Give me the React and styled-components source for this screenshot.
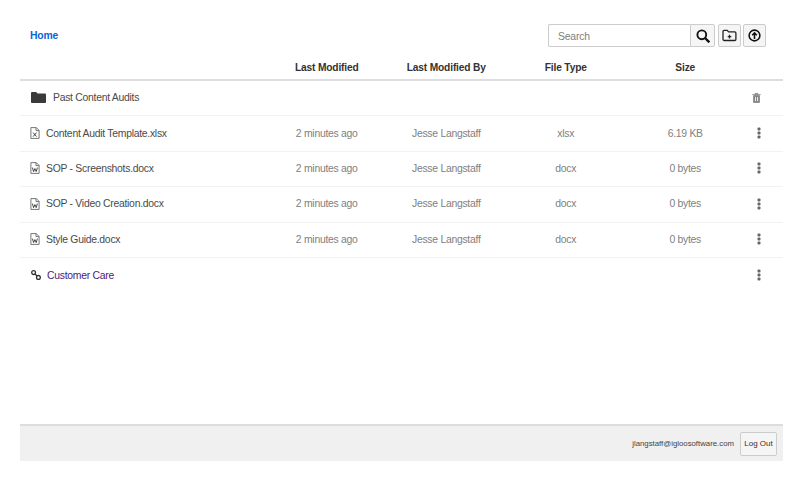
import React from 'react';
import styled, { createGlobalStyle } from 'styled-components';

const GlobalStyle = createGlobalStyle`
  html, body {
    margin: 0;
    padding: 0;
    background: #fff;
    font-family: "Liberation Sans", Arial, sans-serif;
  }
`;

const COLUMNS = '247px 119.5px 119.5px 119.5px 119.5px 38px';

const Page = styled.div`
  width: 763px;
  height: 461px;
  margin-left: 20px;
  margin-right: 17px;
  display: flex;
  flex-direction: column;
`;

const Toolbar = styled.div`
  height: 47px;
  display: flex;
  align-items: flex-end;
  justify-content: space-between;
  padding: 0 17px 0 10px;
`;

const Crumb = styled.a`
  align-self: flex-start;
  margin-top: 29px;
  font-size: 10.4px;
  letter-spacing: -0.2px;
  line-height: 13px;
  font-weight: bold;
  color: #0a66d8;
`;

const Tools = styled.div`
  display: flex;
  gap: 2.5px;
`;

const SearchGroup = styled.div`
  display: flex;
  height: 23px;
  box-sizing: border-box;
`;

const SearchInput = styled.div`
  width: 142px;
  box-sizing: border-box;
  border: 1px solid #ccc;
  border-right: none;
  border-radius: 2px 0 0 2px;
  padding-left: 9px;
  font-size: 10.4px;
  letter-spacing: -0.2px;
  line-height: 23px;
  color: #808080;
`;

const ToolButton = styled.button`
  width: ${props => props.$width || 23}px;
  height: 23px;
  padding: 0;
  box-sizing: border-box;
  display: flex;
  align-items: center;
  justify-content: center;
  background: #f5f5f5;
  border: 1px solid #ccc;
  border-radius: ${props => props.$attached ? '0 2px 2px 0' : '2px'};
`;

const HeaderRow = styled.div`
  display: grid;
  grid-template-columns: ${COLUMNS};
  height: 34px;
  box-sizing: border-box;
  border-bottom: 2px solid #ddd;
  padding-top: 15px;
  font-size: 10.2px;
  letter-spacing: -0.15px;
  line-height: 12px;
  font-weight: bold;
  color: #333;
`;

const HeaderCell = styled.div`
  text-align: center;
`;

const Row = styled.div`
  display: grid;
  grid-template-columns: ${COLUMNS};
  align-items: center;
  height: 35.4px;
  box-sizing: border-box;
  padding-bottom: 1px;
  border-bottom: ${props => props.$last ? 'none' : '1px solid #f2f2f2'};
  font-size: 10.4px;
  letter-spacing: -0.27px;
  color: #808080;
`;

const NameCell = styled.div`
  display: flex;
  align-items: center;
  gap: ${props => props.$gap || 6}px;
  padding-left: ${props => props.$pad || 10}px;
  color: ${props => props.$color || '#4a4a4a'};
`;

const Cell = styled.div`
  text-align: center;
`;

const ActionCell = styled.div`
  grid-column: 6;
  display: flex;
  justify-content: center;
  transform: translateX(${props => props.$shift || -5}px);
`;

const Footer = styled.div`
  margin-top: auto;
  height: 37px;
  box-sizing: border-box;
  background: #f0f0f0;
  border-top: 2px solid #ddd;
  display: flex;
  align-items: center;
  justify-content: flex-end;
  gap: 6px;
  padding-right: 6px;
`;

const Email = styled.span`
  font-size: 7.8px;
  color: #444;
`;

const LogOut = styled.button`
  width: 37px;
  height: 24px;
  padding: 0;
  background: #f5f5f5;
  border: 1px solid #ccc;
  border-radius: 2px;
  font-family: inherit;
  font-size: 8px;
  color: #333;
`;

const SearchIcon = () => (
  <svg width="14" height="14" viewBox="0 0 14 14" fill="none" stroke="#111" strokeWidth="1.9">
    <circle cx="5.8" cy="5.8" r="4.4" />
    <path d="M9 9l4.300 4.300" strokeWidth="2.400" />
  </svg>
);

const NewFolderIcon = () => (
  <svg width="15" height="13" viewBox="0 0 15 13" fill="none" stroke="#222" strokeWidth="1.300">
    <path d="M1 2.600c0-.8.500-1.300 1.200-1.300h3l1.400 1.600h6.100c.7 0 1.200.5 1.200 1.200v6.200c0 .7-.5 1.200-1.200 1.200H2.200c-.7 0-1.200-.5-1.200-1.200z" />
    <path d="M7.500 5.800v3.600M5.700 7.600h3.600" />
  </svg>
);

const UploadIcon = () => (
  <svg width="13" height="13" viewBox="0 0 14 14" fill="none" stroke="#111" strokeWidth="1.700">
    <circle cx="7" cy="7" r="5.800" />
    <path d="M7 10.800V4.500M4.500 6.800L7 4.200l2.500 2.600" />
  </svg>
);

const FolderIcon = () => (
  <svg width="15" height="11" viewBox="0 0 15 12" preserveAspectRatio="none" fill="#3a3a3a">
    <path d="M0 1.200C0 .5.500 0 1.200 0h3.900l1.500 1.600h7.200c.7 0 1.200.5 1.200 1.200v8c0 .7-.5 1.200-1.200 1.200H1.200C.5 12 0 11.500 0 10.800z" />
  </svg>
);

const FileIcon = ({ letter }) => (
  <svg width="10" height="12" viewBox="0 0 10 12" fill="none" stroke="#666" strokeWidth="0.9">
    <path d="M.9.6h5.400l2.800 2.800v8H.9z" />
    <path d="M6 .6v3h3.100" />
    {letter === 'x'
      ? <path d="M3.100 5.600l3.400 4M6.500 5.600l-3.400 4" stroke="#333" />
      : <path d="M2.400 5.600l1.200 4 1.300-3 1.300 3 1.200-4" stroke="#333" />}
  </svg>
);

const LinkIcon = () => (
  <svg width="10" height="10" viewBox="0 0 10 10" fill="none" stroke="#333" strokeWidth="1.300">
    <circle cx="2.600" cy="2.600" r="1.900" />
    <circle cx="7.400" cy="7.400" r="1.900" />
    <path d="M4 4l2 2" />
  </svg>
);

const TrashIcon = () => (
  <svg width="9" height="10" viewBox="0 0 9 10" fill="#888" stroke="#888" strokeWidth="0.8">
    <path d="M1.500 2.500h6v7h-6zM.3 1.600h8.400M3 1.500V.5h3v1" />
    <path d="M3.500 4v4M5.500 4v4" stroke="#fff" />
  </svg>
);

const MoreIcon = () => (
  <svg width="4" height="12" viewBox="0 0 4 12" fill="#666">
    <rect x="0.500" y="0.500" width="3" height="3" rx="1" />
    <rect x="0.500" y="4.500" width="3" height="3" rx="1" />
    <rect x="0.500" y="8.500" width="3" height="3" rx="1" />
  </svg>
);

const FILES = [
  { name: 'Content Audit Template.xlsx', type: 'xlsx', size: '6.19 KB' },
  { name: 'SOP - Screenshots.docx', type: 'docx', size: '0 bytes' },
  { name: 'SOP - Video Creation.docx', type: 'docx', size: '0 bytes' },
  { name: 'Style Guide.docx', type: 'docx', size: '0 bytes' }
];

const App = () => (
  <Page>
    <GlobalStyle />
    <Toolbar>
      <Crumb>Home</Crumb>
      <Tools>
        <SearchGroup>
          <SearchInput>Search</SearchInput>
          <ToolButton $attached $width={25}><SearchIcon /></ToolButton>
        </SearchGroup>
        <ToolButton><NewFolderIcon /></ToolButton>
        <ToolButton><UploadIcon /></ToolButton>
      </Tools>
    </Toolbar>
    <HeaderRow>
      <div />
      <HeaderCell>Last Modified</HeaderCell>
      <HeaderCell>Last Modified By</HeaderCell>
      <HeaderCell>File Type</HeaderCell>
      <HeaderCell>Size</HeaderCell>
    </HeaderRow>
    <Row>
      <NameCell $gap={7} $pad={11}><FolderIcon />Past Content Audits</NameCell>
      <ActionCell $shift={-8}><TrashIcon /></ActionCell>
    </Row>
    {FILES.map(file => (
      <Row key={file.name}>
        <NameCell><FileIcon letter={file.type[0]} />{file.name}</NameCell>
        <Cell>2 minutes ago</Cell>
        <Cell>Jesse Langstaff</Cell>
        <Cell>{file.type}</Cell>
        <Cell>{file.size}</Cell>
        <ActionCell><MoreIcon /></ActionCell>
      </Row>
    ))}
    <Row $last>
      <NameCell $color="#4b1a78" $pad={11}><LinkIcon />Customer Care</NameCell>
      <ActionCell><MoreIcon /></ActionCell>
    </Row>
    <Footer>
      <Email>jlangstaff@igloosoftware.com</Email>
      <LogOut>Log Out</LogOut>
    </Footer>
  </Page>
);

export default App;
